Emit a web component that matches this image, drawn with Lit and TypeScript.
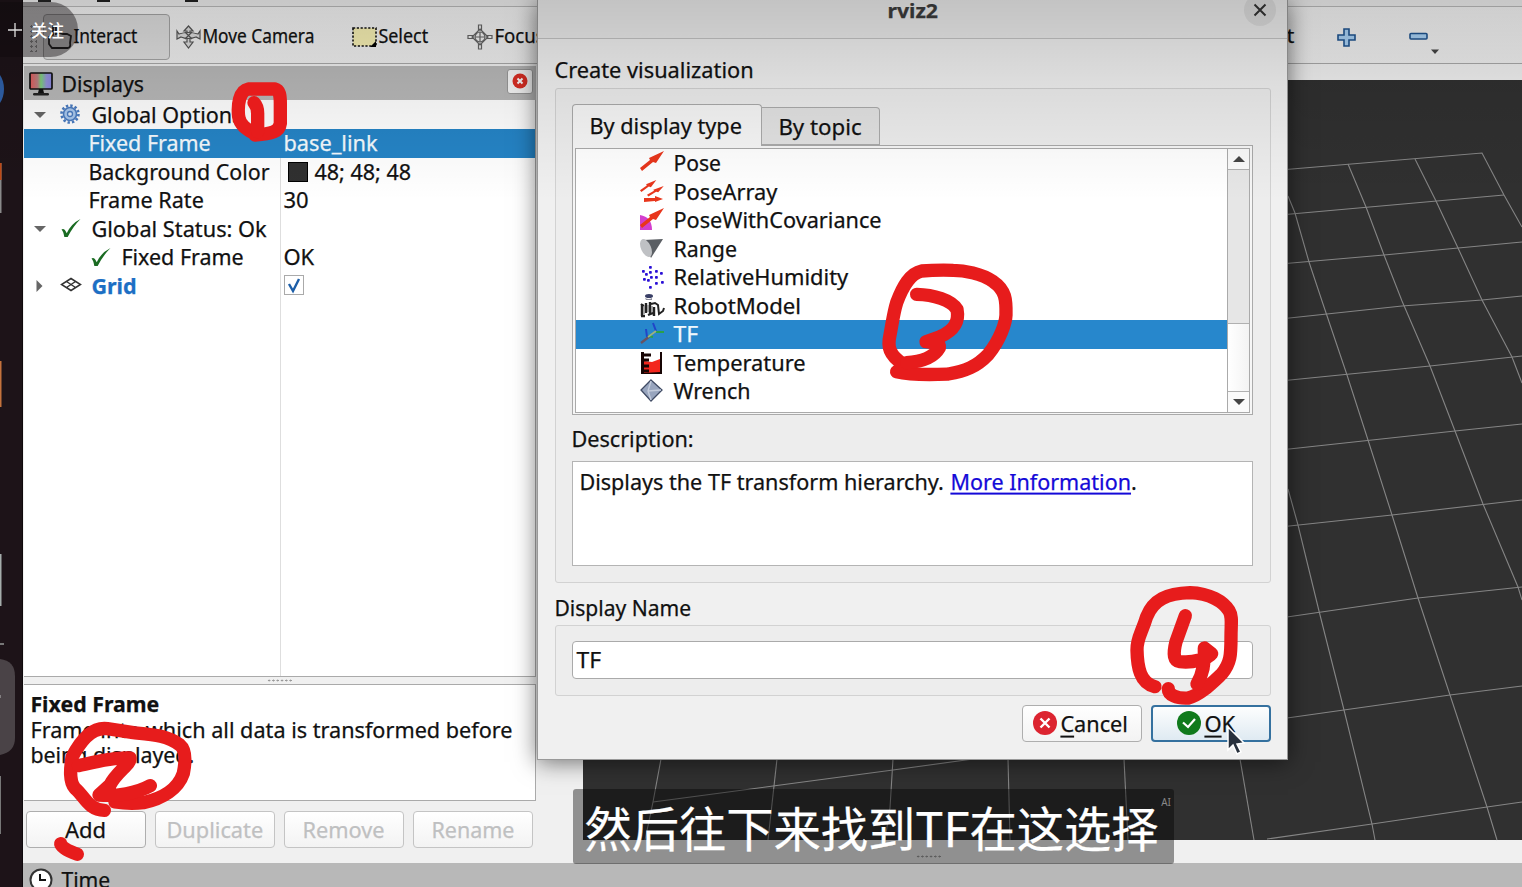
import { LitElement, html, css, svg } from 'lit';
import { customElement, property, query } from 'lit/decorators.js';

// Text squeezed horizontally to a given pixel width
@customElement('fit-text')
export class FitText extends LitElement {
    @property({ type: Number }) w = 0;
    @query('span') label!: HTMLSpanElement;

    static styles = css`
    :host {
      display: inline-block;
      flex: none;
      white-space: nowrap;
      -webkit-text-stroke: .25px currentColor;
    }
    span {
      display: inline-block;
      transform-origin: 0 50%;
    }
  `;

    firstUpdated() {
        const natural = this.label.offsetWidth;
        if (!this.w || !natural) return;
        this.style.width = `${this.w}px`;
        this.label.style.transform = `translate(-.6px, -1.4px) scaleX(${this.w / natural})`;
    }

    render() {
        return html`<span><slot></slot></span>`;
    }
}

const redArrow = (t: string) => svg`
  <g transform=${t}><path d="M0 17L10 9L9 7L24 0L16 12L13 11L2 20Z" fill="#e8361c"/></g>`;

const icons: Record<string, unknown> = {
    pose: redArrow('translate(0 0)'),
    poseArray: svg`
      ${redArrow('translate(0 0) scale(.68 .6)')}
      ${redArrow('translate(7 6) scale(.7 .52)')}
      <path d="M4 18L15 18V16L23 19L15 22V21L4 22Z" fill="#e8361c"/>`,
    poseCov: svg`
      <path d="M0 7Q12 9 12 22H0Z" fill="#d33fce"/>${redArrow('translate(0 0)')}`,
    range: svg`
      <path d="M3 3L23 2L11 21Z" fill="#5b5f64"/>
      <ellipse cx="6" cy="11" rx="5" ry="9.5" transform="rotate(-24 6 11)" fill="#bfc1c4"/>`,
    humidity: svg`
      <g fill="#2a0fd6">${[[10, 2], [3, 6], [16, 6], [21, 8], [6, 9], [10, 7], [4, 14], [8, 15], [11, 12], [16, 12], [16, 18], [22, 17], [10, 22]]
        .map(([x, y]) => svg`<rect x=${x - 1} y=${y - 1} width="2.800" height="2.800" rx=".8"/>`)}</g>`,
    robot: svg`
      <ellipse cx="9" cy="2" rx="4" ry="2" fill="#393f66"/><path d="M5 4Q9 6 12 4V6H6Z" fill="#889"/>
      <path d="M1 10L4 12M11 10L15 9L18 11L19 20L23 17L24 14" fill="none" stroke="#222" stroke-width="2"/>
      <path d="M2 10V22M6 9V19M10 8V21M14 13V22M1 22H5M8 21L13 19" stroke="#222" stroke-width="2.4"/>
      <path d="M4 12V20M8 11V18M12 12V18" stroke="#888" stroke-width="1.4"/>`,
    tf: svg`
      <path d="M1 21L10 14" stroke="#685263" stroke-width="2.4"/>
      <path d="M7 15L6 7M16 9L13 1" stroke="#2145c8" stroke-width="2"/>
      <path d="M8 14L13 15M16 10H24" stroke="#2aa04a" stroke-width="2"/>
      <path d="M8 15L16 9" stroke="#9fb27d" stroke-width="1.6"/>`,
    temp: svg`
      <path d="M1 1V23H22V1H20V18H4V1Z" fill="#170504"/><path d="M4 10L12 11L20 8V21L4 22Z" fill="#f3261d"/>
      <path d="M2 4H11M2 9H9M2 15H9M2 20H9" stroke="#170504" stroke-width="3"/>`,
    wrench: svg`
      <path d="M11 1L22 11L11 22L1 11Z" fill="#98a5be" stroke="#3f4a63" stroke-width="1.3"/>
      <path d="M11 2L8 12L11 21M8 12L21 11" fill="none" stroke="#c3cbdb" stroke-width="1.4"/>`,
};

const types = [
    { icon: 'pose', name: 'Pose', w: 48 },
    { icon: 'poseArray', name: 'PoseArray', w: 104 },
    { icon: 'poseCov', name: 'PoseWithCovariance', w: 208 },
    { icon: 'range', name: 'Range', w: 64 },
    { icon: 'humidity', name: 'RelativeHumidity', w: 175 },
    { icon: 'robot', name: 'RobotModel', w: 128 },
    { icon: 'tf', name: 'TF', w: 25 },
    { icon: 'temp', name: 'Temperature', w: 132 },
    { icon: 'wrench', name: 'Wrench', w: 77 },
];

const gridLines = [
    'M1280 170L1482 153L1504 195L1522 227',
    'M1280 215L1504 195', 'M1280 264L1384 255L1522 242', 'M1280 319L1402 306L1482 300L1522 296',
    'M1280 381L1430 366L1522 356', 'M1280 450L1455 431L1522 424', 'M1280 527L1392 515L1522 500',
    'M1280 618L1418 598L1522 587', 'M1280 719L1450 695L1522 686', 'M1267 839L1372 824L1487 807L1522 802',
    'M1415 159L1436 201L1458 248L1482 300L1512 357L1522 383',
    'M1348 164L1366 207L1384 255L1402 301L1430 366L1455 431L1483 504L1518 587L1522 600',
    'M1288 196L1295 213L1309 262L1322 301L1347 375L1368 440L1392 515L1418 598L1450 695L1487 807L1497 840',
    'M1288 489L1298 525L1319 611L1344 710L1372 824L1375 840',
    'M1240 759L1254 840', 'M1124 759L1128 840', 'M1008 759L1010 840', 'M893 759L890 808L885 840',
    'M777 759L768 840', 'M661 759L653 802L645 840', 'M653 802L773 786L893 770L973 759',
];

@customElement('app-root')
export class AppRoot extends LitElement {
    static styles = css`
    :host {
      display: block;
      position: relative;
      width: 1522px;
      height: 887px;
      overflow: hidden;
      background: #f0f0f0;
      color: #111;
      font: 22px/28px "Noto Sans", "Noto Sans CJK SC", sans-serif;
    }
    * { box-sizing: border-box; }
    svg { display: block; flex: none; overflow: visible; }
    .desk { display: flex; height: 887px; }
    .dock { width: 23px; background: #1d1318; border-right: 1px solid #0f090c; }
    .main { flex: 1; min-width: 0; display: flex; flex-direction: column; }

    .menu {
      height: 7px;
      border-bottom: 1px solid #bcbcbc;
      display: flex;
      padding-left: 15px;
      overflow: hidden;
    }
    .menu i { height: 2px; width: 13px; background: #222; margin-right: 46px; }
    .menu i:nth-child(2) { margin-right: 75px; }
    .toolbar {
      height: 57px;
      border-bottom: 1px solid #a9a9a9;
      background: linear-gradient(#f6f6f6, #efefef);
      display: flex;
      align-items: center;
      font-size: 19px;
      padding: 4px 0 0 5px;
    }
    .handle { width: 8px; height: 28px; margin: 2px 6px 0 1px; background: radial-gradient(circle, #999 1px, transparent 1.2px) 0 0 / 5px 5px; }
    .tool { display: flex; align-items: center; gap: 2px; height: 46px; }
    .tool.on {
      width: 127px;
      padding-left: 4px;
      background: #dfdfdf;
      border: 1px solid #a5a5a5;
      border-radius: 4px;
      margin-right: 6px;
    }
    .tool.select { margin-left: 37px; }
    .tool.focus { margin-left: 38px; }
    .tool.zoom { padding: 0 67px 0 42px; gap: 53px; }
    .grow { flex: 1; }

    .body { flex: 1; display: flex; min-height: 0; }
    .left { width: 513px; padding: 2px 0 0 1px; display: flex; flex-direction: column; }
    .panel-head {
      height: 34px;
      background: #b8b8b8;
      display: flex;
      align-items: center;
      gap: 9px;
      padding: 1px 3px 0 5px;
    }
    .panel-close {
      width: 26px;
      height: 25px;
      margin: -5px 0 0 auto;
      border: 1px solid #999;
      border-radius: 3px;
      background: #f6f6f6;
      display: grid;
      place-items: center;
    }
    .tree {
      height: 577px;
      background: linear-gradient(to right, transparent 256px, #dedede 256px, #dedede 257px, transparent 257px) #fff;
      border-right: 1px solid #aaa;
      border-bottom: 1px solid #aaa;
      padding-top: 1px;
    }
    .row { height: 28.5px; display: flex; align-items: center; }
    .row.sel { background: #2584c6; color: #f4fafe; }
    .name { width: 260px; display: flex; align-items: center; flex: none; }
    .name.a { padding-left: 9px; }
    .name.b { padding-left: 65px; }
    .arrow { width: 14px; margin-right: 14px; }
    .ico { margin-right: 11px; }
    .b .ico { margin: 0 11px 0 2px; }
    .gear { margin: -3px 12px 0 -1px; }
    .grid-ico { margin: -3px 11px 0 0; }
    .cover { background: #fff; height: 28px; }
    .swatch { width: 20px; height: 20px; background: #303030; border: 1px solid #000; margin: 0 7px 0 4px; }
    .check { width: 20px; height: 20px; border: 1px solid #aaa; background: #fff; margin-top: -1px; }
    .grid-name { color: #1d6fc4; font-weight: 700; }
    .split { height: 7px; display: grid; place-items: center; }
    .dots { width: 26px; height: 3px; background: radial-gradient(circle, #999 .9px, transparent 1.1px) 0 0 / 4.3px 3px; }
    .help {
      height: 117px;
      background: #fff;
      border: 1px solid #aaa;
      border-left: 0;
      padding: 7px 0 0 7px;
      line-height: 25.5px;
    }
    .help fit-text { display: block; }
    .actions { display: flex; gap: 9px; padding: 10px 2px; }
    .btn {
      height: 37px;
      width: 120px;
      border: 1px solid #aeaeae;
      border-radius: 4px;
      background: linear-gradient(#fff, #f3f3f3);
      display: flex;
      align-items: center;
      justify-content: center;
    }
    .btn.off { border-color: #c4c4c4; color: #bfc0c1; }
    .view { width: 939px; height: 760px; margin: 16px 0 0 auto; background: #303030; }
    .time {
      height: 24px;
      background: #b8b8b8;
      display: flex;
      gap: 9px;
      padding: 3px 0 0 6px;
    }
    .time svg { margin-top: 2px; }

    .dialog {
      position: absolute;
      left: 537px;
      top: 0;
      width: 751px;
      height: 760px;
      background: #f0f0f0;
      border: 1px solid #999;
      border-top: 0;
      box-shadow: 0 2px 22px rgba(0, 0, 0, .55);
      display: flex;
      flex-direction: column;
    }
    .title {
      height: 39px;
      background: #ebebeb;
      border-bottom: 1px solid #c4c4c4;
      display: flex;
      align-items: center;
      justify-content: flex-end;
      padding: 0 11px 14px 0;
      font-size: 20px;
      font-weight: 700;
      color: #3c3c3c;
      flex: none;
    }
    .title svg { margin: -4px 0 0 305px; }
    .caption { padding-left: 17px; height: 28px; flex: none; }
    .caption.first { margin: 17px 0 4px; }
    .caption.second { margin: 11px 0 3px; }
    .group {
      margin: 0 16px 0 17px;
      border: 1px solid #d2d2d2;
      border-radius: 3px;
      background: #ededed;
      padding: 15px 17px 0 16px;
      flex: none;
    }
    .types { height: 495px; }
    .display-name { height: 71px; }
    .tabs { display: flex; align-items: flex-end; height: 42px; margin-bottom: -1px; }
    .tab {
      position: relative;
      border: 1px solid #aaa;
      height: 38px;
      width: 118px;
      margin-bottom: 1px;
      padding: 5px 0 0 17px;
      background: #e2e2e2;
      border-left: 0;
      border-radius: 0 4px 0 0;
    }
    .tab.on {
      width: 190px;
      height: 42px;
      margin: 0;
      padding-top: 7px;
      border-left: 1px solid #aaa;
      border-radius: 4px 4px 0 0;
      background: #f6f6f6;
      border-bottom: 0;
    }
    .pane { border: 1px solid #aaa; height: 270px; padding: 2px 2px 1px; background: #f6f6f6; }
    .list { border: 1px solid #aaa; height: 265px; display: flex; background: #fff; }
    .items { flex: 1; }
    .item { height: 28.5px; display: flex; align-items: center; gap: 10px; padding-left: 64px; }
    .item.sel { background: #2787cc; color: #eef7fd; }
    .bar { width: 22px; border-left: 1px solid #aaa; display: flex; flex-direction: column; background: #e6e6e6; }
    .cap { height: 20px; background: #fafafa; display: grid; place-items: center; }
    .track { flex: 1; border: solid #b0b0b0; border-width: 1px 0; }
    .thumb { height: 68px; background: linear-gradient(to right, #fff, #f3f3f3); border-bottom: 1px solid #b0b0b0; }
    .desc-label { padding-top: 10px; height: 46px; }
    .desc { height: 105px; border: 1px solid #b4b4b4; background: #fff; padding: 6px 0 0 7px; display: flex; gap: 7px; }
    .desc a { color: #1409d8; text-decoration: underline; text-underline-offset: 3px; text-decoration-thickness: 1.5px; }
    .input { height: 38px; border: 1px solid #aaa; border-radius: 4px; background: #fff; padding: 4px 0 0 4px; }
    .buttons { display: flex; justify-content: flex-end; gap: 9px; padding: 9px 16px 0 0; }
    .buttons .btn { gap: 4px; padding-right: 3px; }
    .buttons .btn.ok { border: 2px solid #35719f; background: linear-gradient(#fdfefe, #dfeaf2); padding-right: 9px; }
    .buttons svg { margin-top: -2px; }
    u { text-underline-offset: 4px; text-decoration-thickness: 2px; }

    .shade {
      position: absolute;
      inset: 0 0 auto 0;
      height: 200px;
      background: linear-gradient(rgba(0, 0, 0, .17), rgba(0, 0, 0, .08) 42%, rgba(0, 0, 0, .03) 75%, transparent);
    }
    .follow {
      position: absolute;
      left: 0;
      top: 2px;
      width: 78px;
      height: 55px;
      border-radius: 0 28px 28px 0;
      background: rgba(15, 10, 12, .42);
      color: #fff;
      display: flex;
      align-items: center;
      gap: 9px;
      padding-left: 8px;
      font: 500 16.5px/20px "Noto Sans CJK SC", sans-serif;
    }
    .subtitle {
      position: absolute;
      left: 573px;
      top: 789px;
      width: 601px;
      height: 75px;
      background: rgba(0, 0, 0, .4);
      border-radius: 3px;
      color: #fff;
      padding: 4px 0 0 12px;
      font: 47.5px/70px "Noto Sans CJK SC", sans-serif;
      -webkit-text-stroke: .5px #fff;
    }
    .ai { position: absolute; right: 3px; top: 7px; font: 10px/12px "Noto Sans", sans-serif; color: #888; -webkit-text-stroke: 0; }
    .subtitle .dots { position: absolute; left: 343px; top: 66px; filter: brightness(.6); }
    .over { position: absolute; left: 0; top: 0; }
  `;

    arrowDown = html`<svg class="arrow" width="14" height="8" viewBox="0 0 14 8"><path d="M1 1H13L7 7Z" fill="#666"/></svg>`;
    tick = html`<svg class="ico" width="20" height="19" viewBox="0 0 20 20"><path d="M0 11Q3 9 5.500 15Q10 5 20 0Q12 8 6.500 19H3Q2 13 0 11Z" fill="#1a6b22"/></svg>`;

    renderToolbar() {
        return html`
      <div class="menu"><i></i><i></i><i></i></div>
      <div class="toolbar">
        <div class="handle"></div>
        <div class="tool on">
          <svg width="24" height="25" viewBox="0 0 24 25"><path d="M4 23H20Q23 22 22 18L23 11L19 9L15 9L11 8L8 9V2L5 1V10L1 12L1 19Z" fill="none" stroke="#222" stroke-width="1.8"/></svg>
          <fit-text w="64">Interact</fit-text>
        </div>
        <div class="tool">
          <svg width="25" height="24" viewBox="0 0 25 24"><g fill="#ddd" stroke="#555" stroke-width="1.2"><path d="M12.500 1L17 6H14V17H17L12.500 23L8 17H11V6H8Z"/><path d="M1 6L3 9Q12 6 22 9L24 6L24 14L20 12Q12 15 5 12L1 14Z"/><path d="M9 7L16 14M16 7L9 14"/></g></svg>
          <fit-text w="112">Move Camera</fit-text>
        </div>
        <div class="tool select">
          <svg width="25" height="21" viewBox="0 0 25 21"><rect x="1" y="1" width="23" height="18" fill="#f8f1b4" stroke="#111" stroke-width="1.6" stroke-dasharray="2.2 1.6"/><path d="M24 14V20H18Z"/></svg>
          <fit-text w="50">Select</fit-text>
        </div>
        <div class="tool focus">
          <svg width="26" height="26" viewBox="0 0 26 26"><g fill="none" stroke="#666" stroke-width="1.2"><path d="M13 5L21 13L13 21L5 13Z"/><circle cx="13" cy="13" r="5"/><path d="M11.500 1H14.500V6H11.500ZM11.500 20H14.500V25H11.500ZM1 11.500H6V14.500H1ZM20 11.500H25V14.500H20ZM8 13H18M13 8V18"/></g></svg>
          <fit-text w="50">Focus</fit-text>
        </div>
        <div class="grow"></div>
        <div class="tool"><fit-text w="8">t</fit-text></div>
        <div class="tool zoom">
          <svg width="19" height="19" viewBox="0 0 19 19"><path d="M7 1H12V7H18V12H12V18H7V12H1V7H7Z" fill="#a9d2f6" stroke="#1f5490" stroke-width="1.600"/></svg>
          <svg width="46" height="32" viewBox="0 0 46 32"><rect x="1" y="12.500" width="17" height="5.500" rx="1" fill="#a9d2f6" stroke="#1f5490" stroke-width="1.600"/><path d="M22 28.500H30L26 33Z" fill="#444"/></svg>
        </div>
      </div>`;
    }

    renderLeft() {
        return html`
      <div class="left">
        <div class="panel-head">
          <svg width="24" height="25" viewBox="0 0 24 25"><defs><linearGradient id="rgb"><stop stop-color="#e55a5a"/><stop offset=".35" stop-color="#b98282"/><stop offset=".5" stop-color="#7bd07b"/><stop offset=".75" stop-color="#9393d8"/><stop offset="1" stop-color="#8a86e0"/></linearGradient></defs><rect x="1" y="2" width="22" height="16" rx="1" fill="url(#rgb)" stroke="#111" stroke-width="1.700"/><path d="M10 18H14L15 22H9Z" fill="#111"/><rect x="4" y="22" width="16" height="2.500" rx="1.200" fill="#222"/></svg>
          <fit-text w="83">Displays</fit-text>
          <div class="panel-close">
            <svg width="16" height="16" viewBox="0 0 16 16"><circle cx="8" cy="8" r="7.500" fill="#dc2f25"/><path d="M5.500 5.500L10.500 10.500M10.500 5.500L5.500 10.500" stroke="#fff" stroke-width="2"/></svg>
          </div>
        </div>
        <div class="tree">
          <div class="row cover"><div class="name a">${this.arrowDown}
            <svg class="gear" width="20" height="20" viewBox="0 0 20 20"><circle cx="10" cy="10" r="8.500" fill="none" stroke="#4b7cc0" stroke-width="2.600" stroke-dasharray="2.400 2.050"/><circle cx="10" cy="10" r="6.500" fill="#a9c8ee" stroke="#4b7cc0" stroke-width="1.600"/><circle cx="10" cy="10" r="2.500" fill="#dfeafa" stroke="#4b7cc0" stroke-width="1.300"/></svg>
            <fit-text w="151">Global Options</fit-text></div></div>
          <div class="row sel"><div class="name b"><fit-text w="122">Fixed Frame</fit-text></div><fit-text w="94">base_link</fit-text></div>
          <div class="row"><div class="name b"><fit-text w="181">Background Color</fit-text></div><div class="swatch"></div><fit-text w="97">48; 48; 48</fit-text></div>
          <div class="row"><div class="name b"><fit-text w="115">Frame Rate</fit-text></div><fit-text w="25">30</fit-text></div>
          <div class="row"><div class="name a">${this.arrowDown}${this.tick}<fit-text w="175">Global Status: Ok</fit-text></div></div>
          <div class="row"><div class="name b">${this.tick}<fit-text w="122">Fixed Frame</fit-text></div><fit-text w="31">OK</fit-text></div>
          <div class="row"><div class="name a">
            <svg class="arrow" width="14" height="12" viewBox="0 0 14 12"><path d="M3.500 0L9.500 6L3.500 12Z" fill="#666"/></svg>
            <svg class="grid-ico" width="20" height="13" viewBox="0 0 20 13"><path d="M10 .5L19.500 6.500L10 12.500L.5 6.500ZM5.500 3.500L14.500 9.500M14.500 3.500L5.500 9.500" fill="none" stroke="#333" stroke-width="1.500"/></svg>
            <fit-text class="grid-name" w="45">Grid</fit-text></div>
            <div class="check"><svg width="18" height="18" viewBox="0 0 18 18"><path d="M4 8L8 15L14 3" fill="none" stroke="#1c5ea8" stroke-width="2.400"/></svg></div></div>
        </div>
        <div class="split"><div class="dots"></div></div>
        <div class="help">
          <fit-text w="129"><b>Fixed Frame</b></fit-text>
          <fit-text w="482">Frame into which all data is transformed before</fit-text>
          <fit-text w="164">being displayed.</fit-text>
        </div>
        <div class="actions">
          <div class="btn"><fit-text w="41">Add</fit-text></div>
          <div class="btn off"><fit-text w="97">Duplicate</fit-text></div>
          <div class="btn off"><fit-text w="82">Remove</fit-text></div>
          <div class="btn off"><fit-text w="83">Rename</fit-text></div>
        </div>
      </div>`;
    }

    renderDialog() {
        return html`
      <div class="dialog">
        <div class="title">
          <fit-text w="51">rviz2</fit-text>
          <svg width="32" height="32" viewBox="0 0 32 32"><circle cx="16" cy="16" r="16" fill="#dcdcdc"/><path d="M10.500 10.500L21.500 21.500M21.500 10.500L10.500 21.500" stroke="#333" stroke-width="2"/></svg>
        </div>
        <div class="caption first"><fit-text w="199">Create visualization</fit-text></div>
        <div class="group types">
          <div class="tabs">
            <div class="tab on"><fit-text w="153">By display type</fit-text></div>
            <div class="tab"><fit-text w="83">By topic</fit-text></div>
          </div>
          <div class="pane"><div class="list">
            <div class="items">
              ${types.map(t => html`
                <div class="item ${t.name === 'TF' ? 'sel' : ''}">
                  <svg width="24" height="24" viewBox="0 0 24 24">${icons[t.icon]}</svg>
                  <fit-text w=${t.w}>${t.name}</fit-text>
                </div>`)}
            </div>
            <div class="bar">
              <div class="cap"><svg width="12" height="6" viewBox="0 0 12 6"><path d="M0 6L6 0L12 6Z" fill="#444"/></svg></div>
              <div class="track"></div>
              <div class="thumb"></div>
              <div class="cap"><svg width="12" height="6" viewBox="0 0 12 6"><path d="M0 0L6 6L12 0Z" fill="#444"/></svg></div>
            </div>
          </div></div>
          <div class="desc-label"><fit-text w="122">Description:</fit-text></div>
          <div class="desc"><fit-text w="364">Displays the TF transform hierarchy.</fit-text><fit-text w="186"><a>More Information</a>.</fit-text></div>
        </div>
        <div class="caption second"><fit-text w="137">Display Name</fit-text></div>
        <div class="group display-name"><div class="input"><fit-text w="25">TF</fit-text></div></div>
        <div class="buttons">
          <div class="btn">
            <svg width="24" height="24" viewBox="0 0 24 24"><circle cx="12" cy="12" r="12" fill="#dc2430"/><path d="M7.500 7.500L16.500 16.500M16.500 7.500L7.500 16.500" stroke="#fff" stroke-width="2.400"/></svg>
            <fit-text w="68"><u>C</u>ancel</fit-text>
          </div>
          <div class="btn ok">
            <svg width="24" height="24" viewBox="0 0 24 24"><circle cx="12" cy="12" r="12" fill="#107a1c"/><path d="M6 11.500L11 16L18 8" fill="none" stroke="#fff" stroke-width="2.200"/></svg>
            <fit-text w="31"><u>O</u>K</fit-text>
          </div>
        </div>
      </div>`;
    }

    // hand-drawn step numbers and the mouse pointer
    renderMarks() {
        return html`
      <svg class="over" width="1522" height="887" viewBox="0 0 1522 887">
        <path d="M1228 727V750L1233 745L1237 754L1241 752L1237 744L1244 743Z" fill="#28303c" stroke="#fff" stroke-width="1.500"/>
        <g fill="none" stroke="#e71c1c" stroke-width="40" stroke-linecap="round" stroke-linejoin="round">
          <g transform="scale(.33333)">
            <path d="M765 402C745 390 720 378 716 350C712 315 718 272 745 267H825C838 270 841 285 841 310V370C838 395 815 402 765 405"/>
            <path d="M762 308Q774 320 773 345V395"/>
          </g>
          <g transform="translate(0 660) scale(.33333)">
            <path d="M313 451C265 450 255 410 225 385C207 365 211 325 216 292C240 245 275 200 322 206L400 218C460 224 500 226 540 255C558 270 557 305 550 340C535 385 490 415 430 428C400 432 370 430 345 426"/>
            <path d="M235 317C290 305 340 292 390 294C394 312 350 335 330 375L297 405C350 410 410 400 451 377"/>
            <path d="M182 551Q185 566 232 583"/>
          </g>
          <g transform="translate(860 140) scale(.33333)">
            <path d="M110 695C160 707 220 704 265 702C315 694 350 680 385 643C420 600 437 550 438 525C439 480 437 450 400 425C365 400 310 391 280 391C240 390 210 391 185 393C150 400 128 440 110 488C100 520 97 550 90 585C82 620 87 645 130 673"/>
            <path d="M170 463C220 464 275 480 291 508C298 545 285 570 240 590L198 605C225 608 240 610 238 623C220 655 180 665 140 668"/>
          </g>
          <g transform="translate(1010 570) scale(.33333)">
            <path d="M435 350C390 340 382 290 381 240C380 205 395 190 410 140C430 90 470 70 540 68C600 70 640 95 657 122C668 140 663 160 663 200C663 255 662 280 635 312C600 345 570 375 535 384C500 386 475 375 475 356"/>
            <path d="M526 137L498 215C488 255 492 272 510 275C550 280 595 265 605 251L583 234C585 270 580 310 561 342"/>
          </g>
        </g>
      </svg>`;
    }

    render() {
        return html`
      <div class="desk">
        <div class="dock">
          <svg width="23" height="887" viewBox="0 0 23 887">
            <ellipse cx="-10" cy="89" rx="14" ry="20" fill="#2f60a8"/>
            <path d="M0 163V213" stroke="#8a8a8a" stroke-width="3"/><path d="M0 163V180" stroke="#c04a16" stroke-width="3"/>
            <path d="M0 361V407" stroke="#c4723c" stroke-width="3"/><path d="M0 554V606" stroke="#a5adab" stroke-width="3"/>
            <path d="M0 644H4" stroke="#777" stroke-width="2"/>
            <path d="M0 659Q15 661 15 676V738Q15 752 0 755Z" fill="#4a4347"/><path d="M0 695V698" stroke="#bbb"/>
            <path d="M0 776V834" stroke="#777" stroke-width="2"/>
          </svg>
        </div>
        <div class="main">
          ${this.renderToolbar()}
          <div class="body">
            ${this.renderLeft()}
            <svg class="view" viewBox="583 80 939 760">
              ${gridLines.map(d => svg`<path d=${d} fill="none" stroke="#858585" stroke-width="1.1"/>`)}
            </svg>
          </div>
          <div class="time">
            <svg width="24" height="24" viewBox="0 0 24 24"><circle cx="12" cy="12" r="10.500" fill="#fff" stroke="#333" stroke-width="2"/><path d="M11 6V12H17" fill="none" stroke="#111" stroke-width="2"/></svg>
            <fit-text w="49">Time</fit-text>
          </div>
        </div>
      </div>
      ${this.renderDialog()}
      <div class="shade"></div>
      <div class="follow">
        <svg width="14" height="14" viewBox="0 0 14 14"><path d="M7 0V14M0 7H14" stroke="#ddd" stroke-width="1.300"/></svg>
        <span>关注</span>
      </div>
      <div class="subtitle"><div class="dots"></div><fit-text w="574">然后往下来找到TF在这选择</fit-text><span class="ai">AI</span></div>
      ${this.renderMarks()}
    `;
    }
}
